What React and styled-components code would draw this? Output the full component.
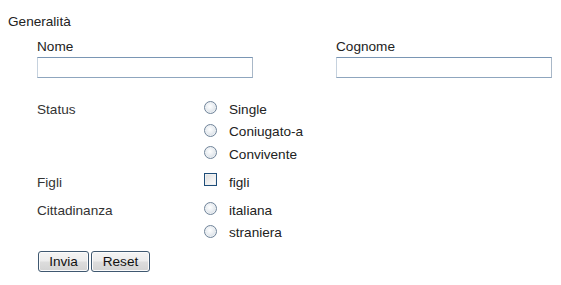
import styled, { createGlobalStyle } from "styled-components";

const GlobalStyle = createGlobalStyle`
  html, body {
    margin: 0;
    padding: 0;
    background: #ffffff;
  }
  body {
    font-family: "Liberation Sans", Arial, sans-serif;
    font-size: 13.6px;
    color: #222222;
  }
`;

const Form = styled.form`
  padding: 14px 0 0 8px;
  line-height: 15px;
`;

const Legend = styled.div`
  color: #222222;
`;

const Fields = styled.div`
  padding-left: 29px;
`;

const NameRow = styled.div`
  display: flex;
  gap: 83px;
  margin-top: 10px;
`;

const Field = styled.div`
  display: flex;
  flex-direction: column;
  width: 216px;
`;

const Label = styled.label`
  color: #222222;
`;

const TextInput = styled.input`
  box-sizing: border-box;
  width: 216px;
  height: 21px;
  margin-top: 3px;
  border: 1px solid #a9b8c8;
  border-top-color: #7a96b4;
  border-bottom-color: #8fa6be;
  border-left-color: #c6d2de;
  background: #ffffff;
  font: inherit;
  outline: none;
`;

const Groups = styled.div`
  display: grid;
  grid-template-columns: 167px 1fr;
  margin-top: 20px;
`;

const GroupLabel = styled.div`
  height: 22.5px;
  display: flex;
  align-items: center;
  color: #333333;
`;

const Options = styled.div`
  display: flex;
  flex-direction: column;
  margin-bottom: 5.5px;
`;

const Option = styled.label`
  height: 22.5px;
  display: flex;
  align-items: center;
  color: #222222;
`;

const RadioMark = styled.span`
  box-sizing: border-box;
  width: 13px;
  height: 13px;
  margin-top: -3px;
  margin-right: 12px;
  border-radius: 50%;
  border: 1px solid #70849a;
  background: radial-gradient(circle at 45% 40%, #ffffff 0%, #e9edf1 45%, #c5ced8 100%);
  box-shadow: inset 0 0 0 1px #eef1f4;
`;

const CheckMark = styled.span`
  box-sizing: border-box;
  width: 13px;
  height: 13px;
  margin-top: -5px;
  margin-right: 12px;
  border: 1px solid #1f4e79;
  background: linear-gradient(135deg, #dcdcdc 0%, #f2f2f2 60%, #ffffff 100%);
  box-shadow: inset 0 0 0 1px #f0f0f0;
`;

const Buttons = styled.div`
  display: flex;
  gap: 2px;
  margin-top: 1px;
  padding-left: 1px;
`;

const Button = styled.button`
  box-sizing: border-box;
  height: 21px;
  width: ${(p) => p.$w}px;
  padding: 0;
  border: 1px solid #3f5870;
  border-radius: 3px;
  background: linear-gradient(#f4f4f4 0%, #ececec 48%, #dddddd 52%, #d3d3d3 100%);
  box-shadow: inset 0 0 0 1px #fbfbfb;
  font-family: "Liberation Sans", Arial, sans-serif;
  font-size: 13.6px;
  color: #111111;
`;

const Radio = ({ children }) => (
  <Option>
    <RadioMark />
    {children}
  </Option>
);

export default function App() {
  return (
    <>
      <GlobalStyle />
      <Form onSubmit={(e) => e.preventDefault()}>
        <Legend>Generalità</Legend>
        <Fields>
          <NameRow>
            <Field>
              <Label>Nome</Label>
              <TextInput type="text" />
            </Field>
            <Field>
              <Label>Cognome</Label>
              <TextInput type="text" />
            </Field>
          </NameRow>
          <Groups>
            <GroupLabel>Status</GroupLabel>
            <Options>
              <Radio>Single</Radio>
              <Radio>Coniugato-a</Radio>
              <Radio>Convivente</Radio>
            </Options>
            <GroupLabel>Figli</GroupLabel>
            <Options>
              <Option>
                <CheckMark />
                figli
              </Option>
            </Options>
            <GroupLabel>Cittadinanza</GroupLabel>
            <Options>
              <Radio>italiana</Radio>
              <Radio>straniera</Radio>
            </Options>
          </Groups>
          <Buttons>
            <Button type="submit" $w={51}>Invia</Button>
            <Button type="reset" $w={59}>Reset</Button>
          </Buttons>
        </Fields>
      </Form>
    </>
  );
}
